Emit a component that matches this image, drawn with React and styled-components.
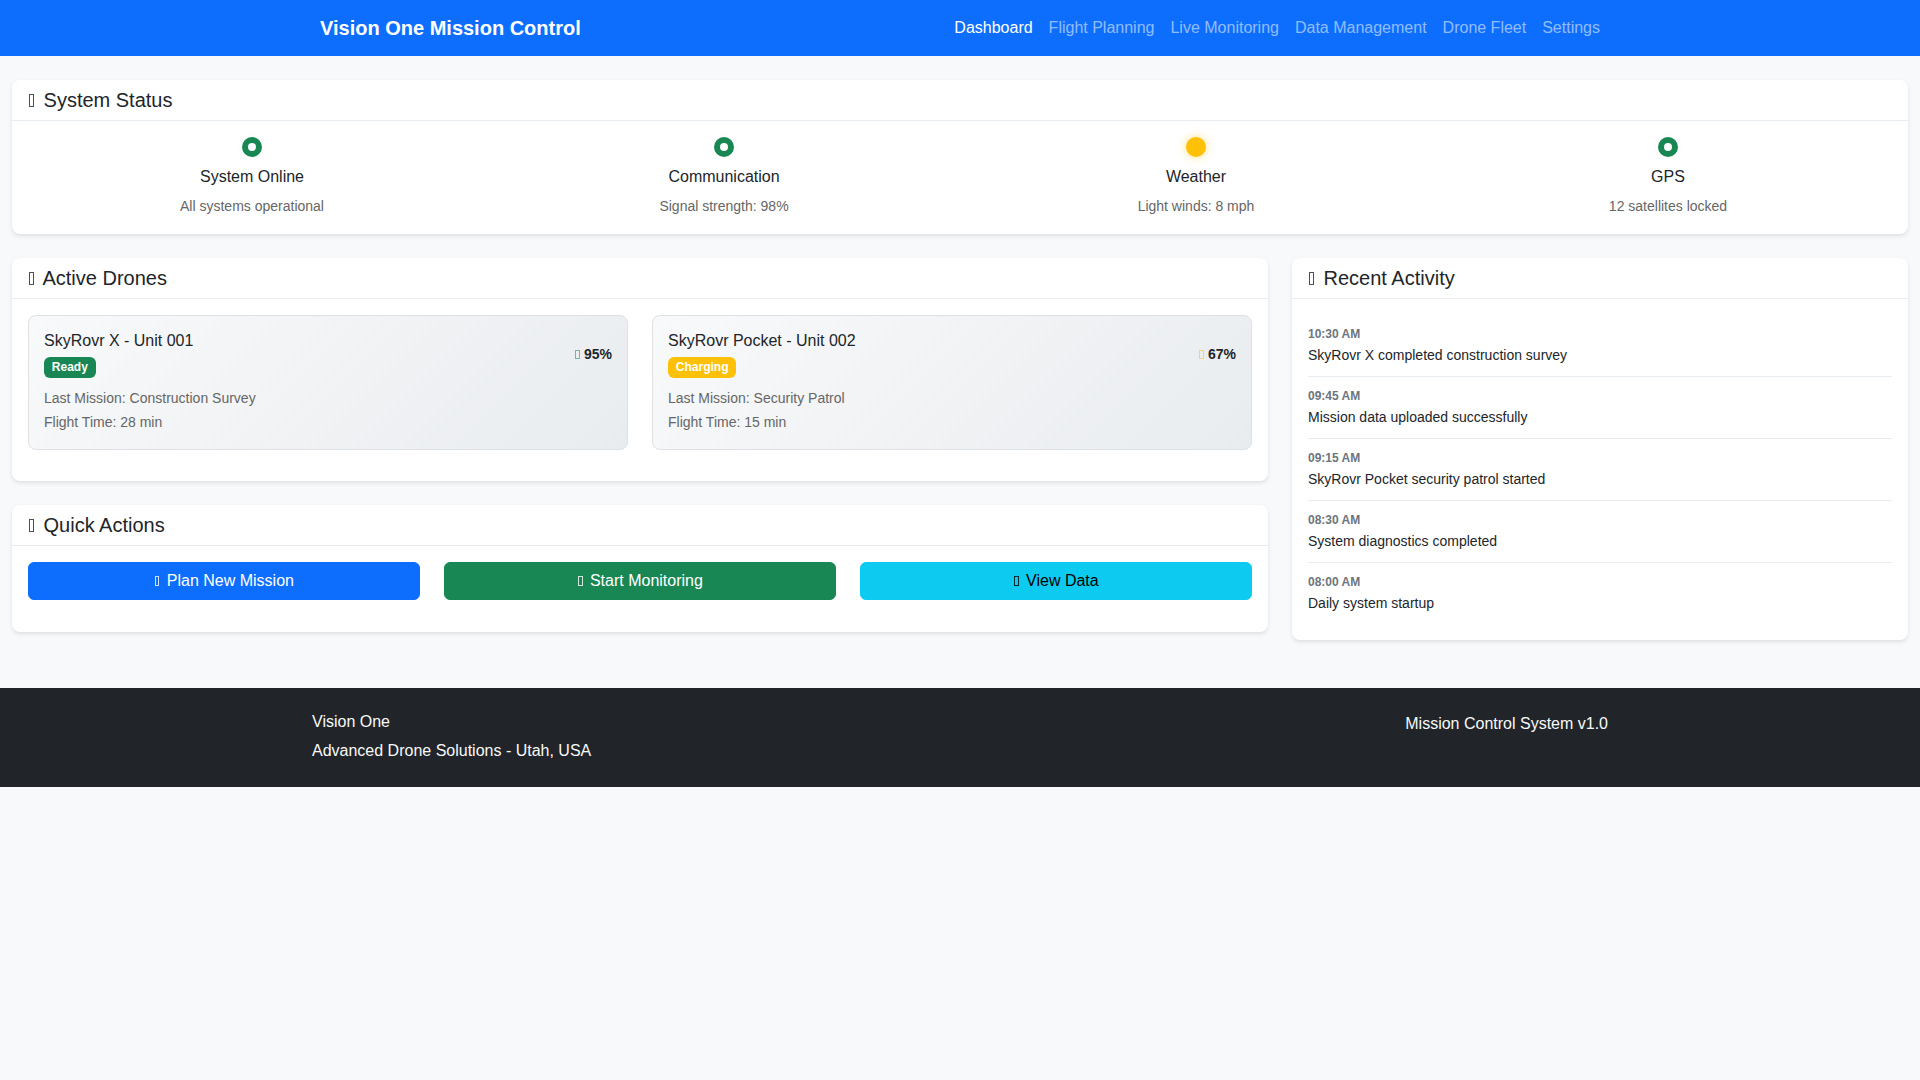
import React from 'react';
import styled, { createGlobalStyle } from 'styled-components';

const GlobalStyle = createGlobalStyle`
  * {
    box-sizing: border-box;
  }
  html, body {
    margin: 0;
    min-height: 100%;
  }
  body {
    background: #f8f9fa;
    color: #212529;
    font-family: "Liberation Sans", Arial, sans-serif;
    font-size: 16px;
    line-height: 1.5;
  }
`;

const NavBar = styled.nav`
  background: #0d6efd;
  height: 56px;
`;

const Container = styled.div`
  width: 1320px;
  margin: 0 auto;
  padding: ${(p) => p.$padding || '0 12px'};
  display: flex;
  align-items: ${(p) => p.$align || 'center'};
  justify-content: space-between;
  height: ${(p) => p.$height || 'auto'};
`;

const Brand = styled.a`
  color: #fff;
  font-size: 20px;
  font-weight: 700;
  padding-left: 8px;
`;

const NavLinks = styled.div`
  display: flex;
`;

const NavLink = styled.a`
  padding: 8px;
  color: ${(p) => (p.$active ? '#fff' : 'rgba(255, 255, 255, 0.55)')};
`;

const Main = styled.main`
  padding: 24px 12px 0;
`;

const Card = styled.section`
  background: #fff;
  border-radius: 8px;
  box-shadow: 0 2px 4px rgba(0, 0, 0, 0.1);
  margin-bottom: 24px;
`;

const CardHeader = styled.header`
  padding: 8px 16px;
  border-bottom: 1px solid #e9ecef;
`;

const CardTitle = styled.h5`
  margin: 0;
  font-size: 20px;
  font-weight: 500;
  line-height: 1.2;
`;

// the icon font is missing in the reference, so every icon is the same thin empty box
const IconBox = styled.i`
  display: inline-block;
  width: max(0.265em, 4.6px);
  height: 0.67em;
  margin: 0 0.185em 0 0.05em;
  border: 1px solid ${(p) => p.$color || 'currentColor'};
  opacity: 0.8;
`;

const CardBody = styled.div`
  padding: ${(p) => p.$padding || '16px'};
`;

const StatusGrid = styled.div`
  display: grid;
  grid-template-columns: repeat(4, 1fr);
  text-align: center;
`;

const StatusItem = styled.div`
  padding: 0 12px;
`;

const Dot = styled.span`
  display: block;
  position: relative;
  width: 20px;
  height: 20px;
  margin: 0 auto 10px;
  border-radius: 50%;
  background: ${(p) => (p.$warn ? '#ffc107' : '#198754')};
  box-shadow: 0 0 8px ${(p) => (p.$warn ? 'rgba(255, 193, 7, 0.5)' : 'rgba(25, 135, 84, 0.06)')};

  &::after {
    content: '';
    display: ${(p) => (p.$warn ? 'none' : 'block')};
    position: absolute;
    top: 6px;
    left: 6px;
    width: 8px;
    height: 8px;
    border-radius: 50%;
    background: #fff;
  }
`;

const StatusName = styled.h6`
  margin: 0 0 8px;
  font-size: 16px;
  font-weight: 500;
  line-height: 1.2;
`;

const StatusText = styled.p`
  margin: 0;
  color: #666;
  font-size: 14px;
  line-height: 24px;
`;

const Columns = styled.div`
  display: grid;
  grid-template-columns: minmax(0, 1fr) 616px;
  column-gap: 24px;
  align-items: start;
`;

const DroneGrid = styled.div`
  display: grid;
  grid-template-columns: repeat(2, 1fr);
  column-gap: 24px;
`;

const DroneCard = styled.article`
  margin-bottom: 15px;
  padding: 15px;
  border: 1px solid #dee2e6;
  border-radius: 8px;
  background: linear-gradient(135deg, #f8f9fa, #e9ecef);
`;

const DroneTop = styled.div`
  display: flex;
  align-items: center;
  justify-content: space-between;
  margin-bottom: 8px;
`;

const DroneName = styled.h6`
  margin: 0 0 4px;
  font-size: 16px;
  font-weight: 500;
  line-height: 1.2;
`;

const Badge = styled.span`
  display: inline-block;
  padding: 4.2px 7.8px;
  border-radius: 6px;
  background: ${(p) => (p.$charging ? '#ffc107' : '#198754')};
  color: #fff;
  font-size: 12px;
  font-weight: 700;
  line-height: 1;
  vertical-align: baseline;
`;

const Battery = styled.div`
  font-size: 14px;
  font-weight: 700;

  i {
    margin-right: 0;
    opacity: 0.55;
  }
`;

const DroneMeta = styled.small`
  display: block;
  color: #666;
  font-size: 14px;
  line-height: 24px;
`;

const ActionGrid = styled.div`
  display: grid;
  grid-template-columns: repeat(3, 1fr);
  column-gap: 24px;
  margin-bottom: 8px;
`;

const ActionButton = styled.button`
  height: 38px;
  margin-bottom: 8px;
  padding: 6px 12px;
  border: 1px solid ${(p) => p.$bg};
  border-radius: 6px;
  background: ${(p) => p.$bg};
  color: ${(p) => p.$fg};
  font-family: inherit;
  font-size: 16px;
  line-height: 1.5;
`;

const ActivityItem = styled.div`
  padding: 10px 0;
  border-bottom: ${(p) => (p.$last ? '0' : '1px solid #e9ecef')};
`;

const ActivityTime = styled.div`
  margin-bottom: 2px;
  color: #6c757d;
  font-size: 12px;
  font-weight: 700;
  line-height: 18px;
`;

const ActivityText = styled.div`
  font-size: 14px;
  line-height: 21px;
`;

const Footer = styled.footer`
  margin-top: 24px;
  background: #212529;
  color: #f8f9fa;
`;

const FooterName = styled.h6`
  margin: 0 0 8px;
  font-size: 16px;
  font-weight: 500;
  line-height: 1.2;
`;

const FooterText = styled.p`
  margin: 0;
`;

const links = ['Dashboard', 'Flight Planning', 'Live Monitoring', 'Data Management', 'Drone Fleet', 'Settings'];

const statuses = [
  { name: 'System Online', text: 'All systems operational' },
  { name: 'Communication', text: 'Signal strength: 98%' },
  { name: 'Weather', text: 'Light winds: 8 mph', warn: true },
  { name: 'GPS', text: '12 satellites locked' },
];

const drones = [
  { name: 'SkyRovr X - Unit 001', status: 'Ready', battery: '95%', color: '#198754', mission: 'Construction Survey', time: '28 min' },
  { name: 'SkyRovr Pocket - Unit 002', status: 'Charging', battery: '67%', color: '#ffc107', charging: true, mission: 'Security Patrol', time: '15 min' },
];

const actions = [
  { label: 'Plan New Mission', bg: '#0d6efd', fg: '#fff' },
  { label: 'Start Monitoring', bg: '#198754', fg: '#fff' },
  { label: 'View Data', bg: '#0dcaf0', fg: '#000' },
];

const activity = [
  { time: '10:30 AM', text: 'SkyRovr X completed construction survey' },
  { time: '09:45 AM', text: 'Mission data uploaded successfully' },
  { time: '09:15 AM', text: 'SkyRovr Pocket security patrol started' },
  { time: '08:30 AM', text: 'System diagnostics completed' },
  { time: '08:00 AM', text: 'Daily system startup' },
];

const App = () => {
  return (
    <>
      <GlobalStyle />
      <NavBar>
        <Container $height="56px">
          <Brand>Vision One Mission Control</Brand>
          <NavLinks>
            {links.map((link, i) => (
              <NavLink key={link} $active={i === 0}>{link}</NavLink>
            ))}
          </NavLinks>
        </Container>
      </NavBar>

      <Main>
        <Card>
          <CardHeader>
            <CardTitle><IconBox /> System Status</CardTitle>
          </CardHeader>
          <CardBody $padding="16px 4px">
            <StatusGrid>
              {statuses.map((s) => (
                <StatusItem key={s.name}>
                  <Dot $warn={s.warn} />
                  <StatusName>{s.name}</StatusName>
                  <StatusText>{s.text}</StatusText>
                </StatusItem>
              ))}
            </StatusGrid>
          </CardBody>
        </Card>

        <Columns>
          <div>
            <Card>
              <CardHeader>
                <CardTitle><IconBox /> Active Drones</CardTitle>
              </CardHeader>
              <CardBody>
                <DroneGrid>
                  {drones.map((d) => (
                    <DroneCard key={d.name}>
                      <DroneTop>
                        <div>
                          <DroneName>{d.name}</DroneName>
                          <Badge $charging={d.charging}>{d.status}</Badge>
                        </div>
                        <Battery><IconBox $color={d.color} /> {d.battery}</Battery>
                      </DroneTop>
                      <DroneMeta>Last Mission: {d.mission}</DroneMeta>
                      <DroneMeta>Flight Time: {d.time}</DroneMeta>
                    </DroneCard>
                  ))}
                </DroneGrid>
              </CardBody>
            </Card>

            <Card>
              <CardHeader>
                <CardTitle><IconBox /> Quick Actions</CardTitle>
              </CardHeader>
              <CardBody>
                <ActionGrid>
                  {actions.map((a) => (
                    <ActionButton key={a.label} $bg={a.bg} $fg={a.fg}>
                      <IconBox /> {a.label}
                    </ActionButton>
                  ))}
                </ActionGrid>
              </CardBody>
            </Card>
          </div>

          <Card>
            <CardHeader>
              <CardTitle><IconBox /> Recent Activity</CardTitle>
            </CardHeader>
            <CardBody>
              {activity.map((a, i) => (
                <ActivityItem key={a.time} $last={i === activity.length - 1}>
                  <ActivityTime>{a.time}</ActivityTime>
                  <ActivityText>{a.text}</ActivityText>
                </ActivityItem>
              ))}
            </CardBody>
          </Card>
        </Columns>
      </Main>

      <Footer>
        <Container $padding="24px 12px" $align="flex-start">
          <div>
            <FooterName>Vision One</FooterName>
            <FooterText>Advanced Drone Solutions - Utah, USA</FooterText>
          </div>
          <FooterText>Mission Control System v1.0</FooterText>
        </Container>
      </Footer>
    </>
  );
};

export default App;
